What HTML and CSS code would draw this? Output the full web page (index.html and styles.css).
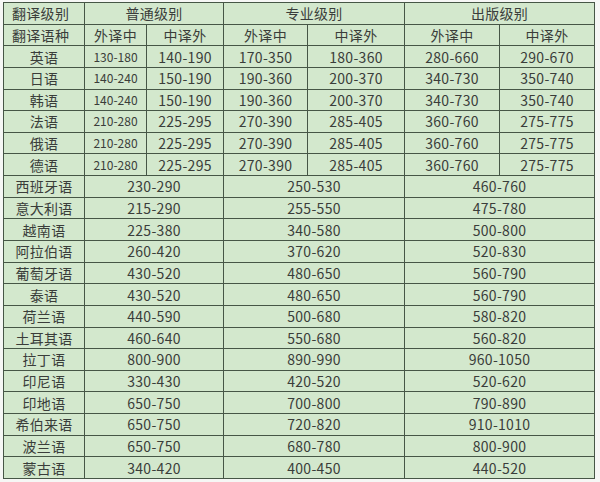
FILE: index.html
```html
<!DOCTYPE html>
<html lang="zh">
<head>
<meta charset="utf-8">
<link rel="stylesheet" href="styles.css">
</head>
<body>
<div class="sheet">
  <div class="cell hd left">翻译级别</div>
  <div class="cell span2">普通级别</div>
  <div class="cell span2">专业级别</div>
  <div class="cell span2">出版级别</div>

  <div class="cell hd left">翻译语种</div>
  <div class="cell">外译中</div><div class="cell">中译外</div>
  <div class="cell">外译中</div><div class="cell">中译外</div>
  <div class="cell">外译中</div><div class="cell">中译外</div>

  <div class="cell">英语</div><div class="cell sm">130-180</div><div class="cell">140-190</div><div class="cell">170-350</div><div class="cell">180-360</div><div class="cell">280-660</div><div class="cell">290-670</div>
  <div class="cell">日语</div><div class="cell sm">140-240</div><div class="cell">150-190</div><div class="cell">190-360</div><div class="cell">200-370</div><div class="cell">340-730</div><div class="cell">350-740</div>
  <div class="cell">韩语</div><div class="cell sm">140-240</div><div class="cell">150-190</div><div class="cell">190-360</div><div class="cell">200-370</div><div class="cell">340-730</div><div class="cell">350-740</div>
  <div class="cell">法语</div><div class="cell sm">210-280</div><div class="cell">225-295</div><div class="cell">270-390</div><div class="cell">285-405</div><div class="cell">360-760</div><div class="cell">275-775</div>
  <div class="cell">俄语</div><div class="cell sm">210-280</div><div class="cell">225-295</div><div class="cell">270-390</div><div class="cell">285-405</div><div class="cell">360-760</div><div class="cell">275-775</div>
  <div class="cell">德语</div><div class="cell sm">210-280</div><div class="cell">225-295</div><div class="cell">270-390</div><div class="cell">285-405</div><div class="cell">360-760</div><div class="cell">275-775</div>

  <div class="cell">西班牙语</div><div class="cell span2">230-290</div><div class="cell span2">250-530</div><div class="cell span2">460-760</div>
  <div class="cell">意大利语</div><div class="cell span2">215-290</div><div class="cell span2">255-550</div><div class="cell span2">475-780</div>
  <div class="cell">越南语</div><div class="cell span2">225-380</div><div class="cell span2">340-580</div><div class="cell span2">500-800</div>
  <div class="cell">阿拉伯语</div><div class="cell span2">260-420</div><div class="cell span2">370-620</div><div class="cell span2">520-830</div>
  <div class="cell">葡萄牙语</div><div class="cell span2">430-520</div><div class="cell span2">480-650</div><div class="cell span2">560-790</div>
  <div class="cell">泰语</div><div class="cell span2">430-520</div><div class="cell span2">480-650</div><div class="cell span2">560-790</div>
  <div class="cell">荷兰语</div><div class="cell span2">440-590</div><div class="cell span2">500-680</div><div class="cell span2">580-820</div>
  <div class="cell">土耳其语</div><div class="cell span2">460-640</div><div class="cell span2">550-680</div><div class="cell span2">560-820</div>
  <div class="cell">拉丁语</div><div class="cell span2">800-900</div><div class="cell span2">890-990</div><div class="cell span2">960-1050</div>
  <div class="cell">印尼语</div><div class="cell span2">330-430</div><div class="cell span2">420-520</div><div class="cell span2">520-620</div>
  <div class="cell">印地语</div><div class="cell span2">650-750</div><div class="cell span2">700-800</div><div class="cell span2">790-890</div>
  <div class="cell">希伯来语</div><div class="cell span2">650-750</div><div class="cell span2">720-820</div><div class="cell span2">910-1010</div>
  <div class="cell">波兰语</div><div class="cell span2">650-750</div><div class="cell span2">680-780</div><div class="cell span2">800-900</div>
  <div class="cell">蒙古语</div><div class="cell span2">340-420</div><div class="cell span2">400-450</div><div class="cell span2">440-520</div>
</div>
</body>
</html>
```
FILE: styles.css
```css
html, body {
  margin: 0;
  padding: 0;
  background: #f6f7f5;
}
body {
  width: 600px;
  height: 482px;
  overflow: hidden;
  font-family: "Noto Sans CJK SC", "Noto Sans", sans-serif;
}
.sheet {
  margin: 2px 0 0 3px;
  width: 592px;
  height: 477px;
  box-sizing: border-box;
  padding: 1px;
  background: #465646;
  display: grid;
  grid-template-columns: 80px 61px 76px 83px 96px 94px 94px;
  grid-template-rows: repeat(22, 1fr);
  gap: 1px;
}
.cell {
  background: #d3e8cd;
  color: #3a3d3a;
  font-size: 14px;
  line-height: 1;
  display: flex;
  align-items: center;
  justify-content: center;
  white-space: nowrap;
  letter-spacing: 0.3px;
}
.cell.sm {
  font-size: 12px;
  letter-spacing: 0;
}
.cell.span2 {
  grid-column: span 2;
}
.cell.left {
  justify-content: flex-start;
  padding-left: 8px;
}
```
